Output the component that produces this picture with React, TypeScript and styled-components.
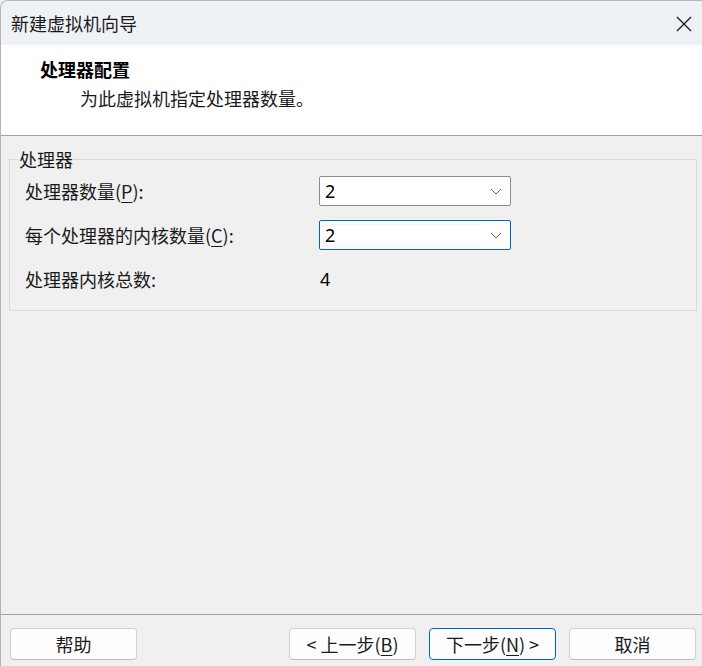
import React from "react";
import styled, { createGlobalStyle } from "styled-components";

const GlobalStyle = createGlobalStyle`
  html, body { margin: 0; padding: 0; background: #f0f0f0; }
  body { font-family: "Noto Sans CJK SC", "Noto Sans", sans-serif; color: #1a1a1a; }
  * { box-sizing: border-box; }
`;

const Window = styled.div`
  width: 702px;
  height: 666px;
  display: flex;
  flex-direction: column;
  background: #f0f0f0;
  border-top: 1px solid #b4b4b4;
  border-left: 1px solid #b4b4b4;
  border-top-left-radius: 8px;
  overflow: hidden;
`;

const TitleBar = styled.div`
  height: 44px;
  flex: none;
  display: flex;
  align-items: center;
  justify-content: space-between;
  padding: 0 9px 0 10px;
  background: #eef2f7;
  font-size: 18px;
  color: #1a1a1a;
`;

const CloseButton = styled.div`
  width: 18px;
  height: 18px;
  display: flex;
  align-items: center;
  justify-content: center;
  margin-top: 1px;
`;

const Header = styled.div`
  height: 91px;
  flex: none;
  background: #ffffff;
  border-bottom: 1px solid #a0a0a0;
  padding: 12px 0 0 39px;
  display: flex;
  flex-direction: column;
  gap: 5px;
`;

const HeaderTitle = styled.div`
  font-size: 18px;
  line-height: 24px;
  font-weight: 700;
  color: #000;
`;

const HeaderSub = styled.div`
  font-size: 18px;
  line-height: 24px;
  padding-left: 40px;
  color: #1a1a1a;
`;

const Body = styled.div`
  flex: 1;
  padding: 11px 5px 0 8px;
`;

const Group = styled.fieldset`
  margin: 0;
  padding: 5px 15px 16px 15px;
  border: 1px solid #dadada;
  min-inline-size: 0;
`;

const Legend = styled.legend`
  font-size: 18px;
  line-height: 24px;
  padding: 0 1px;
  margin-left: -7px;
  color: #1a1a1a;
`;

const Grid = styled.div`
  display: grid;
  grid-template-columns: 294px 192px;
  grid-auto-rows: 30px;
  row-gap: 14px;
  align-items: center;
`;

const Label = styled.div`
  font-size: 18px;
  color: #1a1a1a;
  white-space: nowrap;
`;

const Key = styled.span`
  text-decoration: underline;
  text-underline-offset: 3px;
`;

const Combo = styled.div<{ $focused?: boolean }>`
  height: 30px;
  background: #ffffff;
  border: 1px solid ${(p) => (p.$focused ? "#0067c0" : "#8c8c8c")};
  border-radius: 2px;
  display: flex;
  align-items: center;
  justify-content: space-between;
  padding: 0 8px 0 5px;
  position: relative;
`;

const FocusRing = styled.div`
  position: absolute;
  left: 3px;
  right: 30px;
  top: 3px;
  bottom: 3px;
  border: 1px dotted #ededed;
  border-right: none;
  pointer-events: none;
`;

const ComboValue = styled.span`
  font-family: "Noto Sans", sans-serif;
  font-size: 18px;
  color: #000;
`;

const Value = styled.div`
  font-family: "Noto Sans", sans-serif;
  font-size: 18px;
  color: #000;
  padding-left: 1px;
`;

const Footer = styled.div`
  height: 52px;
  flex: none;
  border-top: 1px solid #a0a0a0;
  display: flex;
  align-items: flex-start;
  padding: 13px 6px 0 9px;
`;

const Spacer = styled.div`
  flex: 1;
`;

const ButtonGroup = styled.div`
  display: flex;
  gap: 13px;
`;

const Button = styled.div<{ $primary?: boolean }>`
  width: 127px;
  height: 32px;
  display: flex;
  align-items: center;
  justify-content: center;
  background: #fdfdfd;
  border: 1px solid ${(p) => (p.$primary ? "#0067c0" : "#d2d2d2")};
  border-bottom-color: ${(p) => (p.$primary ? "#0067c0" : "#bdbdbd")};
  border-radius: 4px;
  font-size: 18px;
  color: #1a1a1a;
  white-space: pre;
`;

const Chevron = () => (
  <svg width="12" height="7" viewBox="0 0 12 7">
    <path d="M1 1 L6 6 L11 1" fill="none" stroke="#606060" strokeWidth="1" />
  </svg>
);

export default function App() {
  return (
    <>
      <GlobalStyle />
      <Window>
        <TitleBar>
          <span>新建虚拟机向导</span>
          <CloseButton>
            <svg width="16" height="16" viewBox="0 0 16 16">
              <path d="M1 1 L15 15 M15 1 L1 15" stroke="#1a1a1a" strokeWidth="1.3" />
            </svg>
          </CloseButton>
        </TitleBar>
        <Header>
          <HeaderTitle>处理器配置</HeaderTitle>
          <HeaderSub>为此虚拟机指定处理器数量。</HeaderSub>
        </Header>
        <Body>
          <Group>
            <Legend>处理器</Legend>
            <Grid>
              <Label>
                处理器数量(<Key>P</Key>):
              </Label>
              <Combo>
                <ComboValue>2</ComboValue>
                <Chevron />
              </Combo>
              <Label>
                每个处理器的内核数量(<Key>C</Key>):
              </Label>
              <Combo $focused>
                <FocusRing />
                <ComboValue>2</ComboValue>
                <Chevron />
              </Combo>
              <Label>处理器内核总数:</Label>
              <Value>4</Value>
            </Grid>
          </Group>
        </Body>
        <Footer>
          <Button>帮助</Button>
          <Spacer />
          <ButtonGroup>
            <Button>
              {"< 上一步("}
              <Key>B</Key>
              {")"}
            </Button>
            <Button $primary>
              {"下一步("}
              <Key>N</Key>
              {") >"}
            </Button>
            <Button>取消</Button>
          </ButtonGroup>
        </Footer>
      </Window>
    </>
  );
}
